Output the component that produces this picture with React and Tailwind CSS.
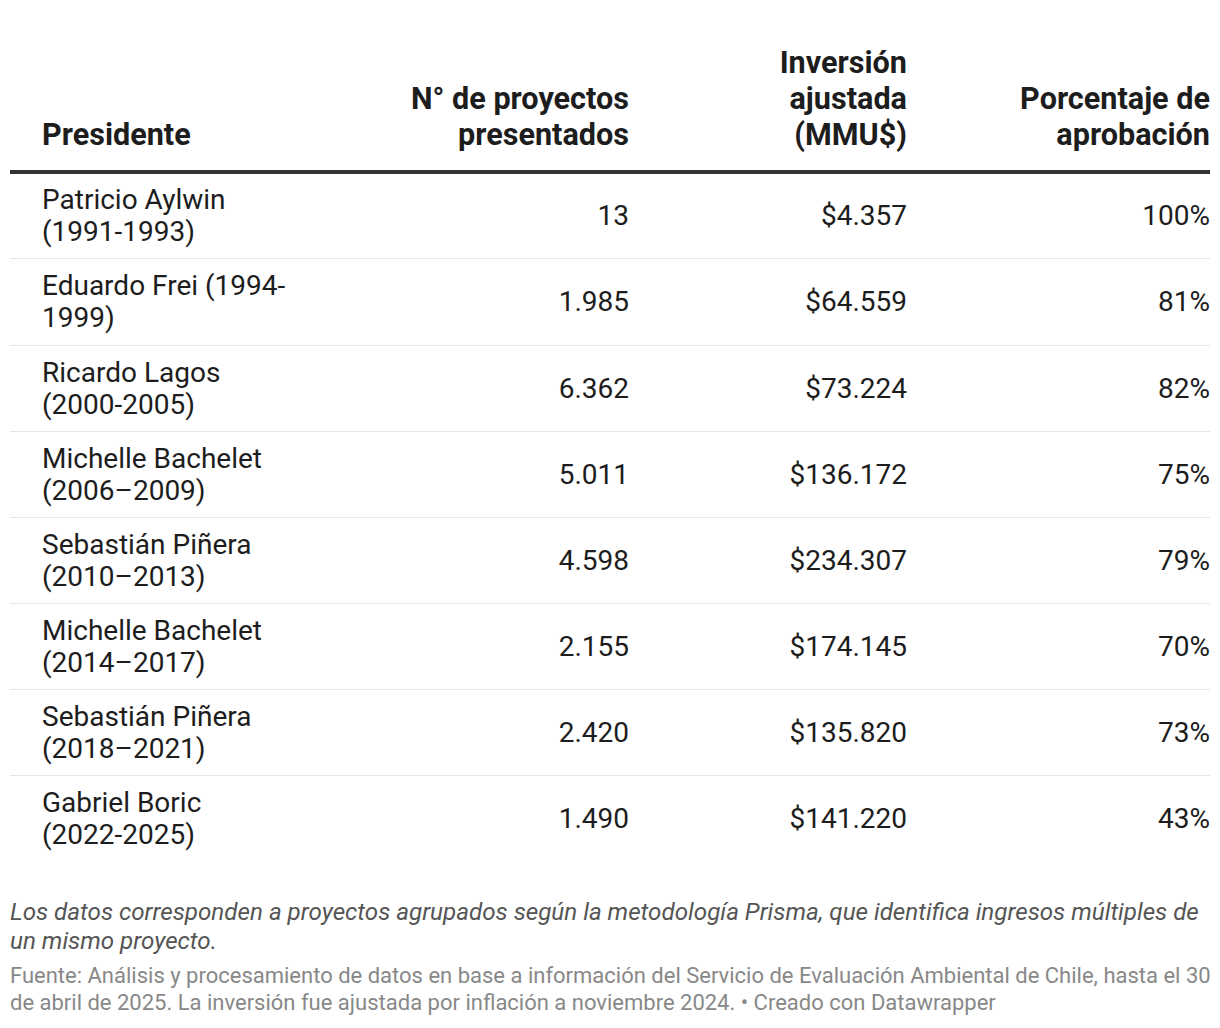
import React from "react";

const rows = [
  ["Patricio Aylwin", "(1991-1993)", "13", "$4.357", "100%"],
  ["Eduardo Frei (1994-", "1999)", "1.985", "$64.559", "81%"],
  ["Ricardo Lagos", "(2000-2005)", "6.362", "$73.224", "82%"],
  ["Michelle Bachelet", "(2006–2009)", "5.011", "$136.172", "75%"],
  ["Sebastián Piñera", "(2010–2013)", "4.598", "$234.307", "79%"],
  ["Michelle Bachelet", "(2014–2017)", "2.155", "$174.145", "70%"],
  ["Sebastián Piñera", "(2018–2021)", "2.420", "$135.820", "73%"],
  ["Gabriel Boric", "(2022-2025)", "1.490", "$141.220", "43%"],
];

export default function App() {
  return (
    <div
      className="w-[1220px] h-[1028px] bg-white text-[#1d1d1d] px-[10px] pt-[45px]"
      style={{ fontFamily: "Roboto, 'Liberation Sans', sans-serif" }}
    >
      <div className="grid grid-cols-[320px_299px_278px_303px] items-end border-b-[4px] border-[#333333] pb-[17px] text-[30.6px] font-bold leading-[36px]">
        <div className="pl-[32px]">Presidente</div>
        <div className="text-right">
          N° de proyectos
          <br />
          presentados
        </div>
        <div className="text-right">
          Inversión
          <br />
          ajustada
          <br />
          (MMU$)
        </div>
        <div className="text-right">
          Porcentaje de
          <br />
          aprobación
        </div>
      </div>
      {rows.map((r, i) => (
        <div
          key={i}
          className={
            "grid grid-cols-[320px_299px_278px_303px] items-center text-[28px] leading-[32px] " +
            (i === rows.length - 1 ? "" : "border-b border-[#e6e6e6] ") +
            (i === 0 ? "pt-[10px] pb-[10px]" : i === 1 ? "pt-[11px] pb-[11px]" : "pt-[11px] pb-[10px]")
          }
        >
          <div className="pl-[32px] whitespace-nowrap">
            {r[0]}
            <br />
            {r[1]}
          </div>
          <div className="text-right">{r[2]}</div>
          <div className="text-right">{r[3]}</div>
          <div className="text-right">{r[4]}</div>
        </div>
      ))}
      <div className="mt-[37px] italic text-[24.2px] leading-[29px] text-[#555555] whitespace-nowrap">
        Los datos corresponden a proyectos agrupados según la metodología Prisma, que identifica ingresos múltiples de
        <br />
        un mismo proyecto.
      </div>
      <div className="mt-[6px] text-[22px] leading-[27px] text-[#888888] whitespace-nowrap">
        Fuente: Análisis y procesamiento de datos en base a información del Servicio de Evaluación Ambiental de Chile, hasta el 30
        <br />
        de abril de 2025. La inversión fue ajustada por inflación a noviembre 2024. • Creado con Datawrapper
      </div>
    </div>
  );
}
